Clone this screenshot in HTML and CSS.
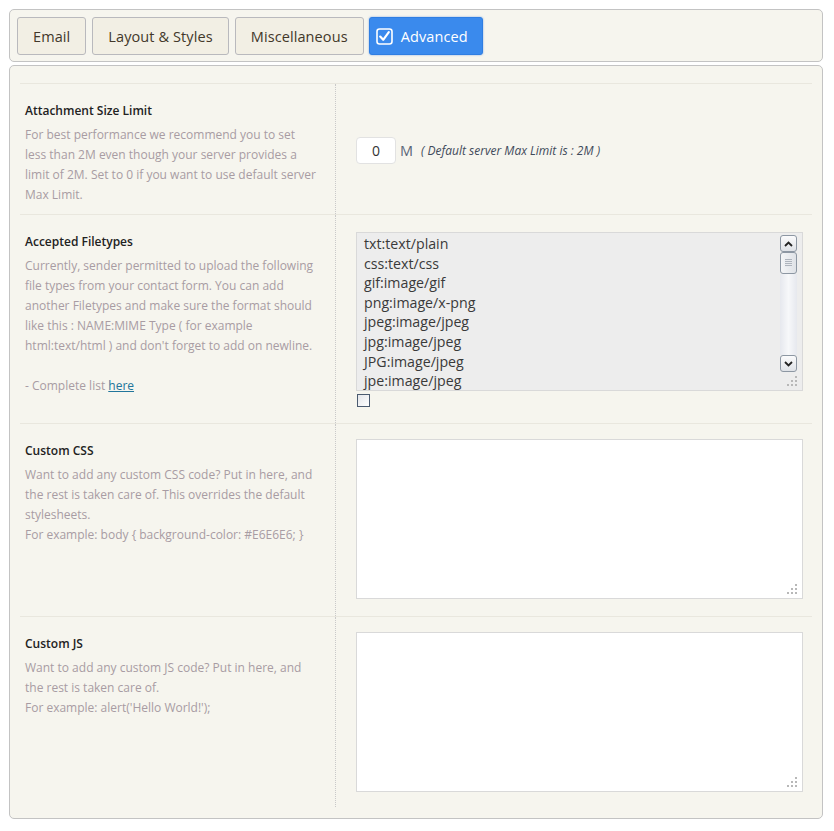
FILE: index.html
```html
<!DOCTYPE html>
<html>
<head>
<meta charset="utf-8">
<link rel="stylesheet" href="styles.css">
</head>
<body>
<div class="wrap">
  <div class="tabbar">
    <a class="tab">Email</a>
    <a class="tab">Layout &amp; Styles</a>
    <a class="tab">Miscellaneous</a>
    <a class="tab active"><svg class="tab-icon" width="17" height="17" viewBox="0 0 17 17"><rect x="1" y="1" width="15" height="15" rx="2.5" fill="none" stroke="#fff" stroke-width="1.6"/><path d="M4.2 8.6 L7.2 11.8 L12.8 4.2" fill="none" stroke="#fff" stroke-width="2.2" stroke-linecap="round" stroke-linejoin="round"/></svg>Advanced</a>
  </div>
  <div class="panel">
    <div class="row">
      <div class="label">
        <div class="title">Attachment Size Limit</div>
        <div class="desc">For best performance we recommend you to set less than 2M even though your server provides a limit of 2M. Set to 0 if you want to use default server Max Limit.</div>
      </div>
      <div class="field center">
        <div class="size">
          <input class="num" type="text" value="0">
          <span class="unit">M</span>
          <span class="note">( Default server Max Limit is : 2M )</span>
        </div>
      </div>
    </div>
    <div class="row">
      <div class="label">
        <div class="title">Accepted Filetypes</div>
        <div class="desc">Currently, sender permitted to upload the following file types from your contact form. You can add another Filetypes and make sure the format should like this : NAME:MIME Type ( for example html:text/html ) and don't forget to add on newline.<br><br>- Complete list <a class="link">here</a></div>
      </div>
      <div class="field ft">
        <div class="areawrap">
          <textarea class="area grey">txt:text/plain
css:text/css
gif:image/gif
png:image/x-png
jpeg:image/jpeg
jpg:image/jpeg
JPG:image/jpeg
jpe:image/jpeg
pdf:application/pdf</textarea>
          <div class="sbar">
            <div class="sbtn"><svg width="9" height="6" viewBox="0 0 9 6"><path d="M1 5 L4.5 1.5 L8 5" fill="none" stroke="#222" stroke-width="1.8"/></svg></div>
            <div class="thumb"><span class="grip"></span></div>
            <div class="track"></div>
            <div class="sbtn"><svg width="9" height="6" viewBox="0 0 9 6"><path d="M1 1 L4.5 4.5 L8 1" fill="none" stroke="#222" stroke-width="1.8"/></svg></div>
          </div>
          <svg class="resize" width="10" height="10" viewBox="0 0 10 10"><g fill="#b8b8b8"><rect x="8" y="0" width="2" height="2"/><rect x="4" y="4" width="2" height="2"/><rect x="8" y="4" width="2" height="2"/><rect x="0" y="8" width="2" height="2"/><rect x="4" y="8" width="2" height="2"/><rect x="8" y="8" width="2" height="2"/></g></svg>
        </div>
        <span class="check"></span>
      </div>
    </div>
    <div class="row">
      <div class="label">
        <div class="title">Custom CSS</div>
        <div class="desc">Want to add any custom CSS code? Put in here, and the rest is taken care of. This overrides the default stylesheets.<br>For example: body { background-color: #E6E6E6; }</div>
      </div>
      <div class="field f3">
        <div class="areawrap">
          <textarea class="area white"></textarea>
          <svg class="resize" width="10" height="10" viewBox="0 0 10 10"><g fill="#b8b8b8"><rect x="8" y="0" width="2" height="2"/><rect x="4" y="4" width="2" height="2"/><rect x="8" y="4" width="2" height="2"/><rect x="0" y="8" width="2" height="2"/><rect x="4" y="8" width="2" height="2"/><rect x="8" y="8" width="2" height="2"/></g></svg>
        </div>
      </div>
    </div>
    <div class="row last">
      <div class="label">
        <div class="title">Custom JS</div>
        <div class="desc">Want to add any custom JS code? Put in here, and the rest is taken care of.<br>For example: alert('Hello World!');</div>
      </div>
      <div class="field">
        <div class="areawrap">
          <textarea class="area white"></textarea>
          <svg class="resize" width="10" height="10" viewBox="0 0 10 10"><g fill="#b8b8b8"><rect x="8" y="0" width="2" height="2"/><rect x="4" y="4" width="2" height="2"/><rect x="8" y="4" width="2" height="2"/><rect x="0" y="8" width="2" height="2"/><rect x="4" y="8" width="2" height="2"/><rect x="8" y="8" width="2" height="2"/></g></svg>
        </div>
      </div>
    </div>
  </div>
</div>
</body>
</html>
```
FILE: styles.css
```css
* { box-sizing: border-box; }
html, body { margin: 0; padding: 0; background: #fff; }
body { font-family: "Open Sans", "Noto Sans", sans-serif; }
.wrap { margin: 9px 11px 0 9px; }

.tabbar {
  display: flex;
  gap: 6px;
  height: 53px;
  padding: 7px 7px 0 7px;
  background: #f6f5ee;
  border: 1px solid #c3c3c3;
  border-radius: 5px;
}
.tab {
  display: flex;
  align-items: center;
  height: 38px;
  padding: 0 15px;
  background: #f2efe4;
  border: 1px solid #b9b9bd;
  border-radius: 3px;
  color: #42382a;
  font-size: 14.5px;
  letter-spacing: 0.1px;
}
.tab.active {
  background: #3a8aed;
  border-color: #2f7ee2;
  color: #fff;
  padding: 0 14px 0 6px;
  box-shadow: 0 0 2px rgba(40,110,220,0.6);
  margin-left: -1px;
}
.tab-icon { margin-right: 8px; }

.panel {
  margin-top: 3px;
  background: #f6f5ee;
  border: 1px solid #c3c3c3;
  border-radius: 5px;
  padding: 17px 10px 11px 10px;
}
.row {
  display: grid;
  grid-template-columns: 316px 1fr;
  border-top: 1px solid #e9e7de;
}
.label {
  padding: 17px 17px 9px 5px;
  border-right: 1px dotted #c9c9c9;
}
.title {
  font-size: 12px;
  font-weight: 600;
  color: #222;
  line-height: 20px;
}
.desc {
  margin-top: 4px;
  font-size: 12px;
  line-height: 20px;
  color: #a89ca3;
}
.link { color: #21759b; text-decoration: underline; }

.field { padding: 15px 10px 15px 20px; }
.field.f3 { padding-bottom: 17px; }
.field.center { display: flex; align-items: center; padding-top: 2px; padding-bottom: 0; }
.field.ft { padding-top: 17px; padding-bottom: 16px; }

.size { display: flex; align-items: center; }
.num {
  width: 40px;
  height: 27px;
  border: 1px solid #e2e2e2;
  border-radius: 4px;
  background: #fff;
  text-align: center;
  font-family: "Open Sans", sans-serif;
  font-size: 14px;
  color: #333;
  padding: 0;
}
.unit { margin-left: 4px; font-size: 14.5px; color: #5a6679; }
.note { margin-left: 8px; font-size: 12px; font-style: italic; color: #3f4a5a; }

.areawrap { position: relative; width: 447px; }
.area {
  display: block;
  width: 447px;
  height: 160px;
  resize: none;
  overflow: hidden;
  border: 1px solid #d9d9d9;
  font-family: "Open Sans", sans-serif;
  outline: none;
}
.area.grey {
  background: #ededed;
  font-size: 14.2px;
  line-height: 19.6px;
  color: #3a3a3a;
  padding: 1px 7px;
  height: 159px;
}
.area.white { background: #fff; }
.resize { position: absolute; right: 6px; bottom: 5px; }

.sbar {
  position: absolute;
  top: 3px;
  right: 6px;
  width: 17px;
  height: 137px;
  display: flex;
  flex-direction: column;
}
.sbtn {
  height: 17px;
  display: flex;
  align-items: center;
  justify-content: center;
  border: 1px solid #8d97a3;
  border-radius: 3px;
  background: linear-gradient(#fbfbfc, #dfe2e7);
}
.thumb {
  height: 22px;
  border: 1px solid #8d97a3;
  border-radius: 3px;
  background: linear-gradient(90deg, #f4f5f7, #dfe2e7);
  display: flex;
  align-items: center;
  justify-content: center;
}
.grip { width: 7px; height: 8px; background: repeating-linear-gradient(#aeb4bd 0 1px, #e8eaee 1px 2px); }
.track { flex: 1; background: linear-gradient(90deg, #e6e8ee, #f7f8fa 50%, #e6e8ee); }

.check {
  display: block;
  width: 13px;
  height: 13px;
  margin-top: 3px;
  margin-left: 1px;
  border: 1px solid #4b5b70;
  background: linear-gradient(135deg, #e4e6ea, #fff);
}
```
